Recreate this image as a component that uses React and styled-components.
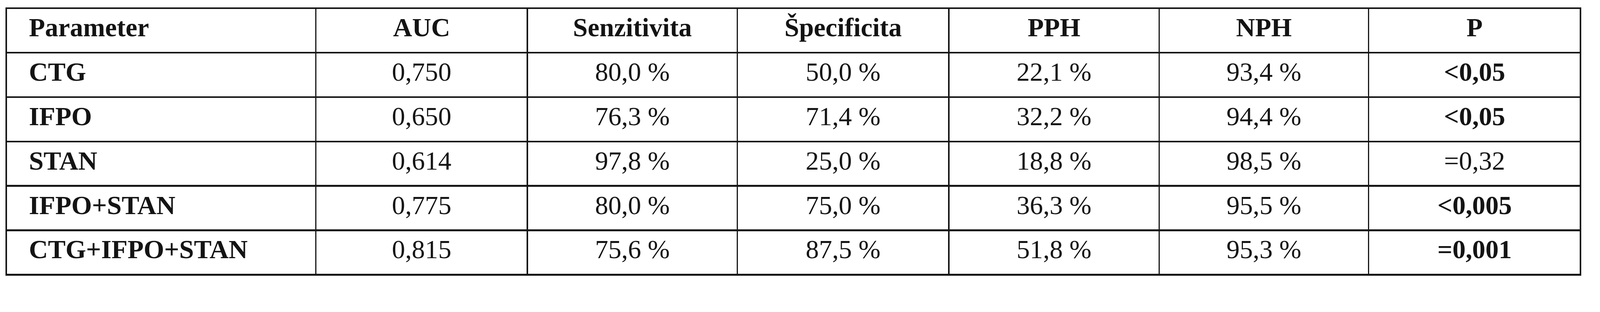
import React from 'react'
import styled, { createGlobalStyle } from 'styled-components'

// the reference is 4544px wide; sizes are given in its pixels and scaled to the viewport
const u = n => `${(n / 45.44).toFixed(4)}vw`

const GlobalStyle = createGlobalStyle`
  html, body {
    margin: 0;
    padding: 0;
    background: #ffffff;
  }
  body {
    overflow: hidden;
  }
`

const columns = [
  'Parameter',
  'AUC',
  'Senzitivita',
  'Špecificita',
  'PPH',
  'NPH',
  'P',
]

const rows = [
  { name: 'CTG', values: ['0,750', '80,0 %', '50,0 %', '22,1 %', '93,4 %'], p: '<0,05', pBold: true },
  { name: 'IFPO', values: ['0,650', '76,3 %', '71,4 %', '32,2 %', '94,4 %'], p: '<0,05', pBold: true },
  { name: 'STAN', values: ['0,614', '97,8 %', '25,0 %', '18,8 %', '98,5 %'], p: '=0,32', pBold: false },
  { name: 'IFPO+STAN', values: ['0,775', '80,0 %', '75,0 %', '36,3 %', '95,5 %'], p: '<0,005', pBold: true },
  { name: 'CTG+IFPO+STAN', values: ['0,815', '75,6 %', '87,5 %', '51,8 %', '95,3 %'], p: '=0,001', pBold: true },
]

export default function App() {
  return (
    <Page>
      <GlobalStyle />
      <Table role="table">
        {columns.map((c, i) => (
          <Cell key={c} $first={i === 0} $bold role="columnheader">
            {c}
          </Cell>
        ))}
        {rows.map(r => (
          <React.Fragment key={r.name}>
            <Cell $first $bold role="rowheader">
              {r.name}
            </Cell>
            {r.values.map((v, i) => (
              <Cell key={i} role="cell">
                {v}
              </Cell>
            ))}
            <Cell $bold={r.pBold} role="cell">
              {r.p}
            </Cell>
          </React.Fragment>
        ))}
      </Table>
    </Page>
  )
}

const Page = styled.div`
  width: 100vw;
  height: 100vh;
  box-sizing: border-box;
  padding: ${u(21)} 0 0 ${u(16)};
  background: #ffffff;
`

const Table = styled.div`
  display: inline-grid;
  grid-template-columns: ${u(875)} ${u(597)} ${u(592)} ${u(597)} ${u(593)} ${u(591)} ${u(598)};
  grid-auto-rows: ${u(121.33)};
  column-gap: ${u(4)};
  row-gap: ${u(5)};
  padding: ${u(5)} ${u(4)};
  background: #161616;
`

const Cell = styled.div`
  display: flex;
  align-items: center;
  justify-content: ${props => (props.$first ? 'flex-start' : 'center')};
  padding: 0 0 ${u(16)} ${props => (props.$first ? u(62) : '0')};
  box-sizing: border-box;
  background: #ffffff;
  font-family: 'Liberation Serif', 'Times New Roman', serif;
  font-size: ${u(75)};
  line-height: 1;
  font-weight: ${props => (props.$bold ? 700 : 400)};
  color: #141414;
  white-space: nowrap;
`
